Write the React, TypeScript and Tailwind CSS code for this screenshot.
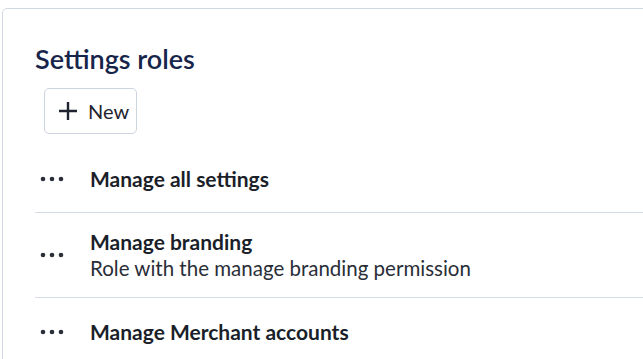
type Role = {
  name: string;
  description?: string;
};

const roles: Role[] = [
  { name: "Manage all settings" },
  {
    name: "Manage branding",
    description: "Role with the manage branding permission",
  },
  { name: "Manage Merchant accounts" },
];

function MoreDots() {
  return (
    <svg width="24" height="6" viewBox="0 0 24 6" className="shrink-0" aria-hidden>
      <circle cx="3" cy="3" r="2.3" fill="#2b2f38" />
      <circle cx="12" cy="3" r="2.3" fill="#2b2f38" />
      <circle cx="21" cy="3" r="2.3" fill="#2b2f38" />
    </svg>
  );
}

function PlusIcon() {
  return (
    <svg width="20" height="20" viewBox="0 0 20 20" aria-hidden>
      <path d="M10 1v18M1 10h18" stroke="#1f2430" strokeWidth="2.4" />
    </svg>
  );
}

export default function App() {
  return (
    <div
      className="h-[359px] w-[643px] overflow-hidden bg-white pl-[2px] pt-[8px]"
      style={{ fontFamily: "Lato, 'Noto Sans', sans-serif" }}
    >
      <div className="h-[400px] w-[700px] rounded-tl-[5px] border border-[#d3d9e4] bg-white pl-[32px] pt-[34px]">
        <h1 className="text-[27px] font-semibold leading-[32px] text-[#17254a]">
          Settings roles
        </h1>

        <button className="ml-[9px] mt-[13px] flex h-[46px] w-[93px] items-center gap-[10px] rounded-[5px] border border-[#cdd4e0] bg-white pl-[13px] text-[20px] text-[#1f2430]">
          <PlusIcon />
          New
        </button>

        <ul className="mt-[11px]">
          {roles.map((role) => (
            <li
              key={role.name}
              className="flex min-h-[68px] items-center border-b border-[#d6dce6] py-4 last:border-b-0"
            >
              <div className="flex w-[55px] justify-start pl-[5px]">
                <MoreDots />
              </div>
              <div className="leading-[26px]">
                <p className="text-[21px] font-bold text-[#1b1f2a]">{role.name}</p>
                {role.description && (
                  <p className="text-[20.5px] text-[#2a2e38]">{role.description}</p>
                )}
              </div>
            </li>
          ))}
        </ul>
      </div>
    </div>
  );
}
